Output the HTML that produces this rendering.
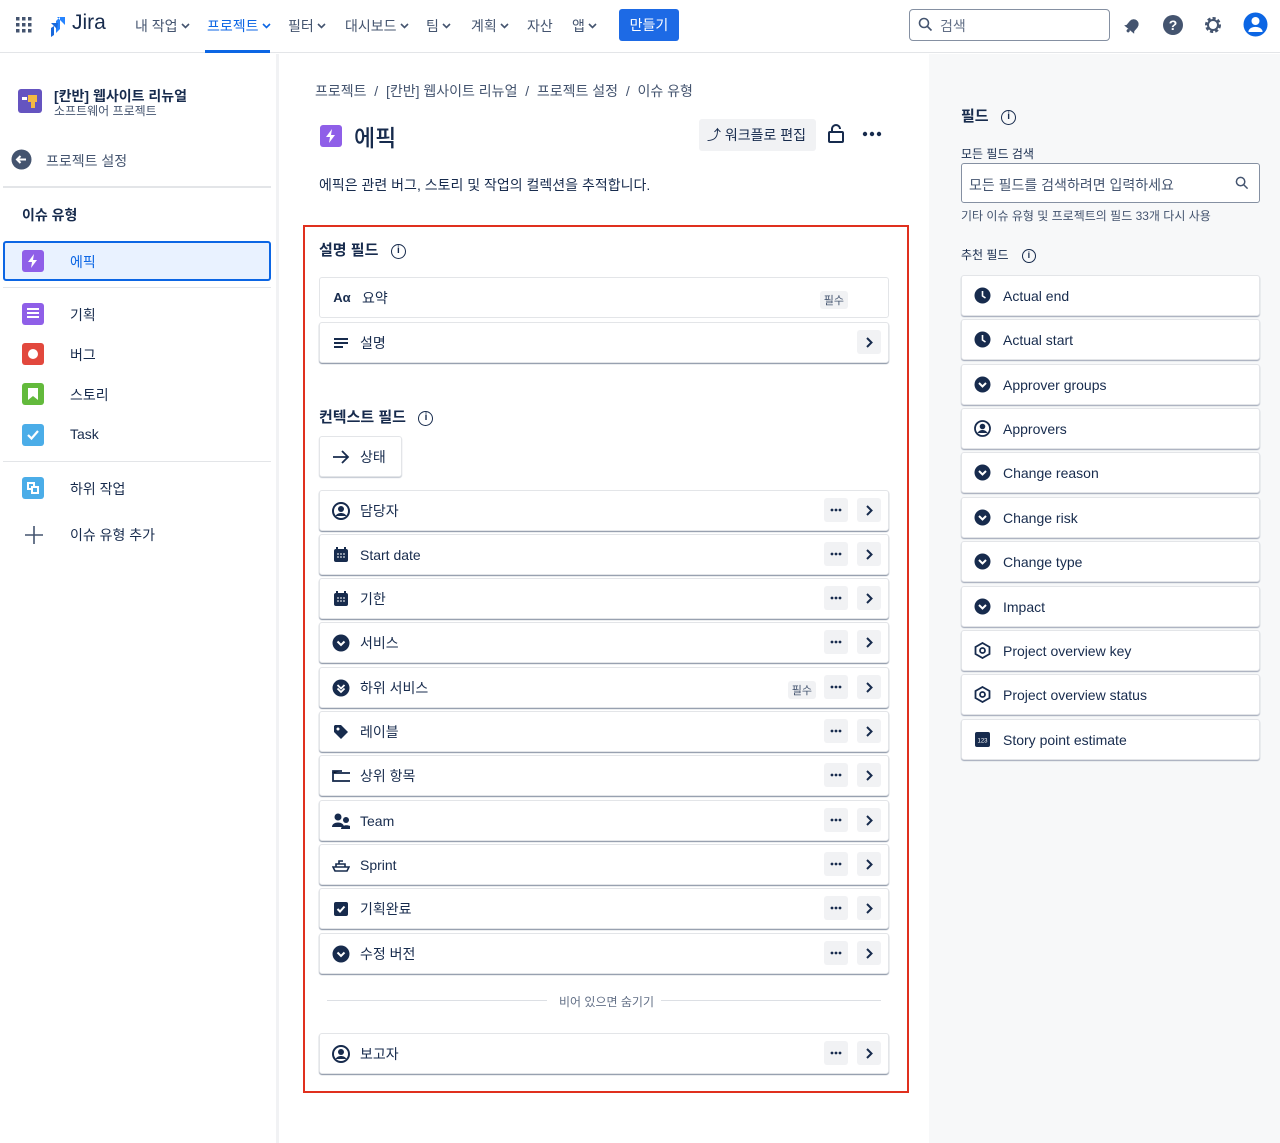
<!DOCTYPE html>
<html><head><meta charset="utf-8"><style>
*{box-sizing:border-box;margin:0;padding:0}
body{width:1280px;height:1143px;position:relative;font-family:"Liberation Sans","Noto Sans CJK KR",sans-serif;color:#172b4d;background:#fff;overflow:hidden;font-size:14px}
.a{position:absolute}
.hdr{left:0;top:0;width:1280px;height:53px;border-bottom:1px solid #e3e5e8}
.nav{top:16px;font-size:14px;color:#44546f;display:flex;align-items:center;gap:3px}
.side{left:0;top:54px;width:279px;height:1089px;border-right:3px solid #f1f2f4}
.rp{left:929px;top:54px;width:351px;height:1089px;background:#f7f8f9}
.row{left:319px;width:570px;height:41px;border:1px solid #e3e5e8;border-radius:3px;box-shadow:0 1px 1px #8590a2;background:#fff;display:flex;align-items:center;padding-left:12px}
.row .ic{width:18px;height:18px;margin-right:10px;display:flex;align-items:center;justify-content:center}
.row .t{font-size:14px;color:#172b4d}
.btn{position:absolute;width:24px;height:24px;background:#f1f2f4;border-radius:3px;display:flex;align-items:center;justify-content:center}
.dots{right:40px;top:7px}
.chev{right:7px;top:7px}
.card{left:961px;width:299px;height:41px;border:1px solid #e3e5e8;border-radius:3px;box-shadow:0 1px 1px #a0a8b8;background:#fff;display:flex;align-items:center;padding-left:12px;font-size:14px}
.card svg{margin-right:12px}
.si{left:22px;width:22px;height:22px;border-radius:3px}
.st{left:70px;font-size:14px}
.tag{position:absolute;font-size:11px;background:#f1f2f4;padding:1px 4px;border-radius:3px;color:#44546f}
</style></head><body>
<svg width="0" height="0" style="position:absolute"><defs>
<g id="dt"><circle cx="3" cy="6" r="1.4" fill="#172b4d"/><circle cx="7" cy="6" r="1.4" fill="#172b4d"/><circle cx="11" cy="6" r="1.4" fill="#172b4d"/></g>
<g id="cv"><path d="M5 2l4.5 4.5L5 11" stroke="#172b4d" stroke-width="2" fill="none"/></g>
<g id="nv"><path d="M1 1l3.5 3.5L8 1" stroke="#44546f" stroke-width="1.6" fill="none"/></g>
</defs></svg>
<div class="a hdr"></div>
<svg class="a" style="left:15px;top:16px" width="18" height="18" viewBox="0 0 18 18" fill="#44546f"><rect x="1" y="1" width="3.5" height="3.5"/><rect x="7" y="1" width="3.5" height="3.5"/><rect x="13" y="1" width="3.5" height="3.5"/><rect x="1" y="7" width="3.5" height="3.5"/><rect x="7" y="7" width="3.5" height="3.5"/><rect x="13" y="7" width="3.5" height="3.5"/><rect x="1" y="13" width="3.5" height="3.5"/><rect x="7" y="13" width="3.5" height="3.5"/><rect x="13" y="13" width="3.5" height="3.5"/></svg>
<svg class="a" style="left:46px;top:15px" width="22" height="22" viewBox="0 0 22 22"><path d="M19 2h-8l8 8z M14 2v12l-4 4V6z" fill="#2684ff"/><path d="M12 8H5l6 6z M8 11v9l-3 2V13z" fill="#1868db"/></svg>
<div class="a" style="left:72px;top:11px;font-size:21px;color:#172b4d">Jira</div>
<div class="a nav" style="left:135px">내 작업<svg width="9" height="6"><use href="#nv"/></svg></div>
<div class="a nav" style="left:207px;color:#0c66e4">프로젝트<svg width="9" height="6"><path d="M1 1l3.5 3.5L8 1" stroke="#0c66e4" stroke-width="1.6" fill="none"/></svg></div>
<div class="a" style="left:205px;top:50px;width:65px;height:3px;background:#0c66e4"></div>
<div class="a nav" style="left:288px">필터<svg width="9" height="6"><use href="#nv"/></svg></div>
<div class="a nav" style="left:345px">대시보드<svg width="9" height="6"><use href="#nv"/></svg></div>
<div class="a nav" style="left:426px">팀<svg width="9" height="6"><use href="#nv"/></svg></div>
<div class="a nav" style="left:471px">계획<svg width="9" height="6"><use href="#nv"/></svg></div>
<div class="a nav" style="left:527px">자산</div>
<div class="a nav" style="left:572px">앱<svg width="9" height="6"><use href="#nv"/></svg></div>
<div class="a" style="left:619px;top:9px;width:60px;height:32px;background:#1d6ae5;border-radius:3px;color:#fff;font-size:14px;text-align:center;line-height:32px">만들기</div>
<div class="a" style="left:909px;top:9px;width:201px;height:32px;border:1px solid #8590a2;border-radius:4px"></div>
<svg class="a" style="left:918px;top:17px" width="15" height="15" viewBox="0 0 15 15" fill="none" stroke="#44546f" stroke-width="1.6"><circle cx="6" cy="6" r="4.5"/><path d="M9.5 9.5l4 4"/></svg>
<div class="a" style="left:940px;top:16px;color:#626f86">검색</div>
<svg class="a" style="left:1123px;top:15px" width="20" height="20" viewBox="0 0 20 20"><g transform="rotate(40 10 10)"><path d="M5 14V9a5 5 0 0110 0v5l1.5 2h-13z" fill="#44546f"/><circle cx="10" cy="17.5" r="1.6" fill="#44546f"/></g></svg>
<svg class="a" style="left:1162px;top:14px" width="22" height="22" viewBox="0 0 22 22"><circle cx="11" cy="11" r="10" fill="#44546f"/><text x="11" y="16" text-anchor="middle" fill="#fff" font-size="14" font-weight="bold" font-family="Liberation Sans">?</text></svg>
<svg class="a" style="left:1202px;top:14px" width="22" height="22" viewBox="0 0 22 22"><circle cx="11" cy="11" r="6.5" fill="none" stroke="#44546f" stroke-width="3" stroke-dasharray="3 2"/><circle cx="11" cy="11" r="5" fill="none" stroke="#44546f" stroke-width="2"/></svg>
<svg class="a" style="left:1243px;top:12px" width="25" height="25" viewBox="0 0 25 25"><circle cx="12.5" cy="12.5" r="12" fill="#0c66e4"/><circle cx="12.5" cy="9" r="4" fill="#fff"/><path d="M5.5 19c1.5-5.5 12.5-5.5 14 0v1h-14z" fill="#fff"/></svg>

<div class="a side"></div>
<svg class="a" style="left:18px;top:89px" width="24" height="24" viewBox="0 0 24 24"><rect width="24" height="24" rx="3" fill="#6554c0"/><rect x="10" y="6" width="9" height="7" fill="#f5b942"/><rect x="13" y="12" width="4" height="7" fill="#f5b942"/><rect x="4" y="8" width="5" height="3" fill="#fff"/></svg>
<div class="a" style="left:54px;top:86px;font-size:14px;font-weight:bold">[칸반] 웹사이트 리뉴얼</div>
<div class="a" style="left:54px;top:102px;font-size:12px;color:#44546f">소프트웨어 프로젝트</div>
<svg class="a" style="left:11px;top:149px" width="21" height="21" viewBox="0 0 21 21"><circle cx="10.5" cy="10.5" r="10" fill="#44546f"/><path d="M15 10.5H6M9.5 7l-3.5 3.5 3.5 3.5" stroke="#fff" stroke-width="2" fill="none"/></svg>
<div class="a" style="left:46px;top:151px;font-size:14px;color:#44546f">프로젝트 설정</div>
<div class="a" style="left:3px;top:186px;width:268px;height:2px;background:#e3e5e8"></div>
<div class="a" style="left:22px;top:205px;font-size:14px;font-weight:bold">이슈 유형</div>
<div class="a" style="left:3px;top:241px;width:268px;height:40px;background:#e9f2ff;border:2px solid #0c66e4;border-radius:3px"></div>
<div class="a si" style="top:250px;background:#8f5fe8"></div><svg class="a" style="left:27px;top:254px" width="12" height="14"><path d="M7 0L1 8h4l-1 6 6-8H6z" fill="#fff"/></svg>
<div class="a st" style="top:252px;color:#0c66e4">에픽</div>
<div class="a" style="left:3px;top:287px;width:268px;height:1px;background:#e3e5e8"></div>
<div class="a si" style="top:303px;background:#8f5fe8"></div><div class="a" style="left:27px;top:308px;width:12px;height:2px;background:#fff;box-shadow:0 4px 0 #fff,0 8px 0 #fff"></div>
<div class="a st" style="top:305px">기획</div>
<div class="a si" style="top:343px;background:#e2483d"></div><div class="a" style="left:28px;top:349px;width:10px;height:10px;border-radius:50%;background:#fff"></div>
<div class="a st" style="top:345px">버그</div>
<div class="a si" style="top:383px;background:#63ba3c"></div><svg class="a" style="left:28px;top:388px" width="10" height="12"><path d="M0 0h10v12l-5-4-5 4z" fill="#fff"/></svg>
<div class="a st" style="top:385px">스토리</div>
<div class="a si" style="top:424px;background:#4bade8"></div><svg class="a" style="left:26px;top:428px" width="14" height="14"><path d="M2 7l3.5 3.5L12 3" stroke="#fff" stroke-width="2.2" fill="none"/></svg>
<div class="a st" style="top:426px">Task</div>
<div class="a" style="left:3px;top:461px;width:268px;height:1px;background:#e3e5e8"></div>
<div class="a si" style="top:477px;background:#4bade8"></div><div class="a" style="left:27px;top:482px;width:8px;height:8px;border:2px solid #fff"></div><div class="a" style="left:31px;top:486px;width:8px;height:8px;border:2px solid #fff;background:#4bade8"></div>
<div class="a st" style="top:479px">하위 작업</div>
<svg class="a" style="left:24px;top:525px" width="20" height="20"><path d="M10 1v18M1 10h18" stroke="#44546f" stroke-width="1.6"/></svg>
<div class="a st" style="top:525px">이슈 유형 추가</div>

<div class="a" style="left:315px;top:81px;font-size:14px;color:#44546f">프로젝트 &nbsp;/&nbsp; [칸반] 웹사이트 리뉴얼 &nbsp;/&nbsp; 프로젝트 설정 &nbsp;/&nbsp; 이슈 유형</div>
<div class="a" style="left:320px;top:125px;width:22px;height:22px;border-radius:3px;background:#8f5fe8"></div><svg class="a" style="left:325px;top:129px" width="12" height="14"><path d="M7 0L1 8h4l-1 6 6-8H6z" fill="#fff"/></svg>
<div class="a" style="left:354px;top:119px;font-size:23px;font-weight:500">에픽</div>
<div class="a" style="left:699px;top:119px;width:117px;height:32px;background:#f1f2f4;border-radius:3px;font-size:14px;line-height:32px;padding-left:8px;color:#172b4d">⤴ 워크플로 편집</div>
<svg class="a" style="left:827px;top:124px" width="18" height="20" viewBox="0 0 18 20" fill="none" stroke="#172b4d" stroke-width="2"><rect x="2" y="8" width="14" height="10" rx="1"/><path d="M5 8V5a4 4 0 018 0"/></svg>
<svg class="a" style="left:862px;top:130px" width="22" height="8"><circle cx="3" cy="4" r="2.2" fill="#172b4d"/><circle cx="10" cy="4" r="2.2" fill="#172b4d"/><circle cx="17" cy="4" r="2.2" fill="#172b4d"/></svg>
<div class="a" style="left:319px;top:175px;font-size:14px">에픽은 관련 버그, 스토리 및 작업의 컬렉션을 추적합니다.</div>

<div class="a" style="left:303px;top:225px;width:606px;height:868px;border:2px solid #e0301e"></div>
<div class="a" style="left:319px;top:239px;font-size:15px;font-weight:bold">설명 필드 &nbsp;&nbsp;<span style="display:inline-block;width:15px;height:15px;border:1.6px solid #172b4d;border-radius:50%;font-size:10px;text-align:center;line-height:12px;vertical-align:middle">i</span></div>
<div class="a row" style="top:277px;box-shadow:none"><div class="ic" style="font-weight:bold;font-size:13px;width:20px">Aα</div><span class="t">요약</span><span class="tag" style="right:40px;top:13px">필수</span></div>
<div class="a row" style="top:322px"><div class="ic"><svg width="14" height="12"><path d="M0 2h14M0 6h14M0 10h9" stroke="#172b4d" stroke-width="2"/></svg></div><span class="t">설명</span><div class="btn chev"><svg width="14" height="13"><use href="#cv"/></svg></div></div>
<div class="a" style="left:319px;top:406px;font-size:15px;font-weight:bold">컨텍스트 필드 &nbsp;&nbsp;<span style="display:inline-block;width:15px;height:15px;border:1.6px solid #172b4d;border-radius:50%;font-size:10px;text-align:center;line-height:12px;vertical-align:middle">i</span></div>
<div class="a row" style="top:436px;width:83px;box-shadow:0 1px 1px #c1c7d0"><div class="ic"><svg width="18" height="14"><path d="M1 7h15M10 1l6 6-6 6" stroke="#172b4d" stroke-width="1.8" fill="none"/></svg></div><span class="t">상태</span></div>

<div class="a row" style="top:490px"><div class="ic"><svg width="18" height="18"><circle cx="9" cy="9" r="8" fill="none" stroke="#172b4d" stroke-width="2"/><circle cx="9" cy="7" r="3" fill="#172b4d"/><path d="M3.5 14c2-4 9-4 11 0" fill="#172b4d"/></svg></div><span class="t">담당자</span><div class="btn dots"><svg width="14" height="12"><use href="#dt"/></svg></div><div class="btn chev"><svg width="14" height="13"><use href="#cv"/></svg></div></div>
<div class="a row" style="top:534px"><div class="ic"><svg width="16" height="16"><rect x="1" y="2" width="14" height="13" rx="2" fill="#172b4d"/><path d="M4 0v3M12 0v3" stroke="#172b4d" stroke-width="2"/><path d="M4 7h2M7 7h2M10 7h2M4 10h2M7 10h2M10 10h2" stroke="#fff"/></svg></div><span class="t">Start date</span><div class="btn dots"><svg width="14" height="12"><use href="#dt"/></svg></div><div class="btn chev"><svg width="14" height="13"><use href="#cv"/></svg></div></div>
<div class="a row" style="top:578px"><div class="ic"><svg width="16" height="16"><rect x="1" y="2" width="14" height="13" rx="2" fill="#172b4d"/><path d="M4 0v3M12 0v3" stroke="#172b4d" stroke-width="2"/><path d="M4 7h2M7 7h2M10 7h2M4 10h2M7 10h2M10 10h2" stroke="#fff"/></svg></div><span class="t">기한</span><div class="btn dots"><svg width="14" height="12"><use href="#dt"/></svg></div><div class="btn chev"><svg width="14" height="13"><use href="#cv"/></svg></div></div>
<div class="a row" style="top:622px"><div class="ic"><svg width="18" height="18"><circle cx="9" cy="9" r="8.5" fill="#172b4d"/><path d="M5.5 7.5L9 11l3.5-3.5" stroke="#fff" stroke-width="2" fill="none"/></svg></div><span class="t">서비스</span><div class="btn dots"><svg width="14" height="12"><use href="#dt"/></svg></div><div class="btn chev"><svg width="14" height="13"><use href="#cv"/></svg></div></div>
<div class="a row" style="top:667px"><div class="ic"><svg width="18" height="18"><circle cx="9" cy="9" r="8.5" fill="#172b4d"/><path d="M5.5 6L9 9.5 12.5 6M5.5 9.5L9 13l3.5-3.5" stroke="#fff" stroke-width="1.8" fill="none"/></svg></div><span class="t">하위 서비스</span><span class="tag" style="right:72px;top:13px">필수</span><div class="btn dots"><svg width="14" height="12"><use href="#dt"/></svg></div><div class="btn chev"><svg width="14" height="13"><use href="#cv"/></svg></div></div>
<div class="a row" style="top:711px"><div class="ic"><svg width="16" height="16"><path d="M1 2v6l7 7 7-7-7-7H2z" fill="#172b4d"/><circle cx="5" cy="5" r="1.5" fill="#fff"/></svg></div><span class="t">레이블</span><div class="btn dots"><svg width="14" height="12"><use href="#dt"/></svg></div><div class="btn chev"><svg width="14" height="13"><use href="#cv"/></svg></div></div>
<div class="a row" style="top:755px"><div class="ic"><svg width="20" height="14"><rect x="1" y="4" width="18" height="8" fill="none" stroke="#172b4d" stroke-width="1.8"/><path d="M1 4V2h9" stroke="#172b4d" stroke-width="1.8"/></svg></div><span class="t">상위 항목</span><div class="btn dots"><svg width="14" height="12"><use href="#dt"/></svg></div><div class="btn chev"><svg width="14" height="13"><use href="#cv"/></svg></div></div>
<div class="a row" style="top:800px"><div class="ic"><svg width="20" height="18"><circle cx="6" cy="5" r="3.5" fill="#172b4d"/><circle cx="14" cy="8" r="3" fill="#172b4d"/><path d="M0 15c0-6 12-6 12 0zM9 17c0-5 11-5 11 0z" fill="#172b4d"/></svg></div><span class="t">Team</span><div class="btn dots"><svg width="14" height="12"><use href="#dt"/></svg></div><div class="btn chev"><svg width="14" height="13"><use href="#cv"/></svg></div></div>
<div class="a row" style="top:844px"><div class="ic"><svg width="18" height="14"><path d="M1 9h16l-2 4H3zM4 9V6h9v3M7 6V3h4" fill="none" stroke="#172b4d" stroke-width="1.6"/></svg></div><span class="t">Sprint</span><div class="btn dots"><svg width="14" height="12"><use href="#dt"/></svg></div><div class="btn chev"><svg width="14" height="13"><use href="#cv"/></svg></div></div>
<div class="a row" style="top:888px"><div class="ic"><svg width="16" height="16"><rect x="1" y="1" width="14" height="14" rx="2" fill="#172b4d"/><path d="M4.5 8l2.5 2.5 4.5-5" stroke="#fff" stroke-width="2" fill="none"/></svg></div><span class="t">기획완료</span><div class="btn dots"><svg width="14" height="12"><use href="#dt"/></svg></div><div class="btn chev"><svg width="14" height="13"><use href="#cv"/></svg></div></div>
<div class="a row" style="top:933px"><div class="ic"><svg width="18" height="18"><circle cx="9" cy="9" r="8.5" fill="#172b4d"/><path d="M5.5 7.5L9 11l3.5-3.5" stroke="#fff" stroke-width="2" fill="none"/></svg></div><span class="t">수정 버전</span><div class="btn dots"><svg width="14" height="12"><use href="#dt"/></svg></div><div class="btn chev"><svg width="14" height="13"><use href="#cv"/></svg></div></div>
<div class="a" style="left:327px;top:1000px;width:220px;height:1px;background:#dcdfe4"></div>
<div class="a" style="left:559px;top:993px;font-size:12px;color:#626f86">비어 있으면 숨기기</div>
<div class="a" style="left:661px;top:1000px;width:220px;height:1px;background:#dcdfe4"></div>
<div class="a row" style="top:1033px"><div class="ic"><svg width="18" height="18"><circle cx="9" cy="9" r="8" fill="none" stroke="#172b4d" stroke-width="2"/><circle cx="9" cy="7" r="3" fill="#172b4d"/><path d="M3.5 14c2-4 9-4 11 0" fill="#172b4d"/></svg></div><span class="t">보고자</span><div class="btn dots"><svg width="14" height="12"><use href="#dt"/></svg></div><div class="btn chev"><svg width="14" height="13"><use href="#cv"/></svg></div></div>

<div class="a rp"></div>
<div class="a" style="left:961px;top:105px;font-size:15px;font-weight:bold">필드 &nbsp;&nbsp;<span style="display:inline-block;width:15px;height:15px;border:1.6px solid #172b4d;border-radius:50%;font-size:10px;text-align:center;line-height:12px;vertical-align:middle">i</span></div>
<div class="a" style="left:961px;top:145px;font-size:12px">모든 필드 검색</div>
<div class="a" style="left:961px;top:163px;width:299px;height:40px;background:#fff;border:1px solid #8590a2;border-radius:3px;padding:11px 7px;font-size:14px;color:#44546f">모든 필드를 검색하려면 입력하세요</div>
<svg class="a" style="left:1235px;top:176px" width="14" height="14" viewBox="0 0 15 15" fill="none" stroke="#44546f" stroke-width="1.6"><circle cx="6" cy="6" r="4.5"/><path d="M9.5 9.5l4 4"/></svg>
<div class="a" style="left:961px;top:207px;font-size:12px;color:#44546f">기타 이슈 유형 및 프로젝트의 필드 33개 다시 사용</div>
<div class="a" style="left:961px;top:246px;font-size:12px">추천 필드 &nbsp;&nbsp;&nbsp;<span style="display:inline-block;width:14px;height:14px;border:1.5px solid #172b4d;border-radius:50%;font-size:9px;text-align:center;line-height:11px;vertical-align:middle;font-weight:bold">i</span></div>
<div class="a card" style="top:275px"><svg width="17" height="17"><circle cx="8.5" cy="8.5" r="8" fill="#172b4d"/><path d="M8.5 4v5l3 2" stroke="#fff" stroke-width="1.6" fill="none"/></svg>Actual end</div>
<div class="a card" style="top:319px"><svg width="17" height="17"><circle cx="8.5" cy="8.5" r="8" fill="#172b4d"/><path d="M8.5 4v5l3 2" stroke="#fff" stroke-width="1.6" fill="none"/></svg>Actual start</div>
<div class="a card" style="top:364px"><svg width="17" height="17"><circle cx="8.5" cy="8.5" r="8" fill="#172b4d"/><path d="M5 7l3.5 3.5L12 7" stroke="#fff" stroke-width="2" fill="none"/></svg>Approver groups</div>
<div class="a card" style="top:408px"><svg width="17" height="17"><circle cx="8.5" cy="8.5" r="7.5" fill="none" stroke="#172b4d" stroke-width="1.8"/><circle cx="8.5" cy="6.5" r="2.8" fill="#172b4d"/><path d="M3.5 13c2-4 8-4 10 0" fill="#172b4d"/></svg>Approvers</div>
<div class="a card" style="top:452px"><svg width="17" height="17"><circle cx="8.5" cy="8.5" r="8" fill="#172b4d"/><path d="M5 7l3.5 3.5L12 7" stroke="#fff" stroke-width="2" fill="none"/></svg>Change reason</div>
<div class="a card" style="top:497px"><svg width="17" height="17"><circle cx="8.5" cy="8.5" r="8" fill="#172b4d"/><path d="M5 7l3.5 3.5L12 7" stroke="#fff" stroke-width="2" fill="none"/></svg>Change risk</div>
<div class="a card" style="top:541px"><svg width="17" height="17"><circle cx="8.5" cy="8.5" r="8" fill="#172b4d"/><path d="M5 7l3.5 3.5L12 7" stroke="#fff" stroke-width="2" fill="none"/></svg>Change type</div>
<div class="a card" style="top:586px"><svg width="17" height="17"><circle cx="8.5" cy="8.5" r="8" fill="#172b4d"/><path d="M5 7l3.5 3.5L12 7" stroke="#fff" stroke-width="2" fill="none"/></svg>Impact</div>
<div class="a card" style="top:630px"><svg width="17" height="17"><path d="M8.5 1l7 4v7l-7 4-7-4V5z" fill="none" stroke="#172b4d" stroke-width="1.8"/><circle cx="8.5" cy="8.5" r="2.5" fill="none" stroke="#172b4d" stroke-width="1.8"/></svg>Project overview key</div>
<div class="a card" style="top:674px"><svg width="17" height="17"><path d="M8.5 1l7 4v7l-7 4-7-4V5z" fill="none" stroke="#172b4d" stroke-width="1.8"/><circle cx="8.5" cy="8.5" r="2.5" fill="none" stroke="#172b4d" stroke-width="1.8"/></svg>Project overview status</div>
<div class="a card" style="top:719px"><svg width="17" height="17"><rect x="1" y="1" width="15" height="15" rx="2" fill="#172b4d"/><text x="8.5" y="11.5" text-anchor="middle" fill="#fff" font-size="6" font-family="Liberation Sans">123</text></svg>Story point estimate</div>
</body></html>
